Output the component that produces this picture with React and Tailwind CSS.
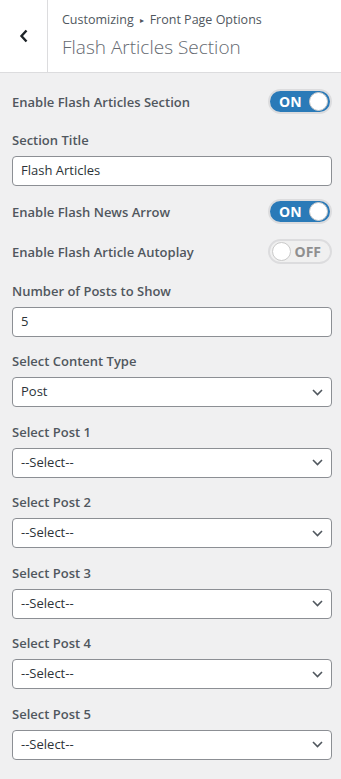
import React from 'react';

const font = { fontFamily: '"Open Sans", "Noto Sans", sans-serif' };

function Toggle({ on }) {
  return on ? (
    <div className="flex h-[25px] w-[64px] items-center justify-between rounded-full border-2 border-[#dcdcde] bg-[#2a7ab8] pl-[9px] pr-[2px]">
      <span className="text-[14px] font-bold text-white">ON</span>
      <span className="h-[19px] w-[19px] rounded-full border border-[#c9c9c9] bg-white" />
    </div>
  ) : (
    <div className="flex h-[25px] w-[64px] items-center justify-between rounded-full border-2 border-[#dcdcde] bg-[#f0f0f0] pl-[2px] pr-[9px]">
      <span className="h-[19px] w-[19px] rounded-full border border-[#c9c9c9] bg-white" />
      <span className="text-[14px] font-bold text-[#8f8f8f]">OFF</span>
    </div>
  );
}

function Chevron() {
  return (
    <svg width="11" height="7" viewBox="0 0 11 7" fill="none" stroke="#50575e" strokeWidth="1.6">
      <path d="M1 1l4.5 4.5L10 1" />
    </svg>
  );
}

function ToggleRow({ label, on }) {
  return (
    <div className="flex items-center justify-between">
      <span className="text-[13px] font-semibold leading-[20px] text-[#50575e]">{label}</span>
      <Toggle on={on} />
    </div>
  );
}

function Field({ label, value }) {
  return (
    <div className="flex flex-col gap-[6px]">
      <span className="text-[13px] font-semibold leading-[20px] text-[#50575e]">{label}</span>
      <div className="flex h-[30px] items-center rounded-[4px] border border-[#8c8f94] bg-white px-[8px] text-[13px] text-[#2c3338]">
        {value}
      </div>
    </div>
  );
}

function SelectField({ label, value }) {
  return (
    <div className="flex flex-col gap-[6px]">
      <span className="text-[13px] font-semibold leading-[20px] text-[#50575e]">{label}</span>
      <div className="flex h-[30px] items-center justify-between rounded-[4px] border border-[#8c8f94] bg-white pl-[8px] pr-[8px] text-[13px] text-[#2c3338]">
        <span>{value}</span>
        <Chevron />
      </div>
    </div>
  );
}

export default function App() {
  return (
    <div className="h-[779px] w-[341px] overflow-hidden bg-[#f0f0f1]" style={font}>
      <div className="flex h-[73px] border-b border-[#dcdcde] bg-white">
        <div className="flex w-[48px] items-center justify-center border-r border-[#dcdcde]">
          <svg width="10" height="14" viewBox="0 0 10 14" fill="none" stroke="#1d2327" strokeWidth="2.4">
            <path d="M7.5 1.5L2.5 7l5 5.5" />
          </svg>
        </div>
        <div className="flex flex-col justify-center pl-[14px] pb-[2px]">
          <div className="flex items-center gap-[6px] text-[12.5px] leading-[18px] text-[#50575e]">
            <span>Customizing</span>
            <span className="text-[8px]">▸</span>
            <span>Front Page Options</span>
          </div>
          <div className="mt-[6px] text-[19px] font-light leading-[24px] text-[#646970]">Flash Articles Section</div>
        </div>
      </div>

      <div className="flex flex-col pl-[12px] pr-[9px] pt-[16px]">
        <ToggleRow label="Enable Flash Articles Section" on />
        <div className="mt-[16px]">
          <Field label="Section Title" value="Flash Articles" />
        </div>
        <div className="mt-[13px]">
          <ToggleRow label="Enable Flash News Arrow" on />
        </div>
        <div className="mt-[15px]">
          <ToggleRow label="Enable Flash Article Autoplay" />
        </div>
        <div className="mt-[17px]">
          <Field label="Number of Posts to Show" value="5" />
        </div>
        <div className="mt-[14px] flex flex-col gap-[14.5px]">
          <SelectField label="Select Content Type" value="Post" />
          <SelectField label="Select Post 1" value="--Select--" />
          <SelectField label="Select Post 2" value="--Select--" />
          <SelectField label="Select Post 3" value="--Select--" />
          <SelectField label="Select Post 4" value="--Select--" />
          <SelectField label="Select Post 5" value="--Select--" />
        </div>
      </div>
    </div>
  );
}
